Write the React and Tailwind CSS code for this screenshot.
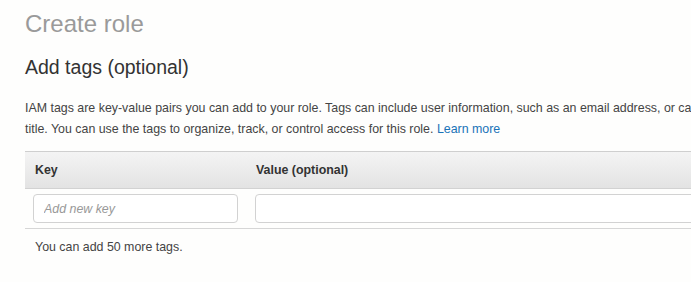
import React from 'react';

export default function App() {
  return (
    <div className="w-[691px] h-[282px] overflow-hidden bg-[#fefefd] font-['Liberation_Sans',Arial,sans-serif]">
      <div className="w-[900px] pl-[25px] pt-[9px]">
        {/* Page title */}
        <h1 className="text-[24px] leading-[30px] text-[#9a9a9a]">Create role</h1>

        {/* Section */}
        <h2 className="mt-[16px] text-[19.5px] leading-[24px] text-[#333]">Add tags (optional)</h2>

        <p className="mt-[19px] text-[12.4px] leading-[21px] text-[#444] whitespace-nowrap">
          IAM tags are key-value pairs you can add to your role. Tags can include user information, such as an email address, or can be descriptive, such as a job
          <br />
          title. You can use the tags to organize, track, or control access for this role.{' '}
          <a href="#" className="text-[#1a73b8]">Learn more</a>
        </p>

        {/* Tags table */}
        <div className="mt-[11px]">
          <div className="flex h-[38px] items-center border-t border-[#cfcfcf] border-b border-b-[#d2d2d2] bg-gradient-to-b from-[#f4f4f4] to-[#e3e3e3] text-[12.4px] font-bold text-[#333]">
            <div className="w-[221px] pl-[10px]">Key</div>
            <div className="pl-[10px]">Value (optional)</div>
          </div>
          <div className="flex items-center h-[40px] border-b border-[#d6d6d6]">
            <div className="w-[221px] pl-[8px]">
              <input
                placeholder="Add new key"
                className="w-[205px] h-[29px] rounded-[4px] border border-[#d2d2d2] bg-white px-[10px] text-[12.4px] italic text-[#333] placeholder:text-[#999] outline-none"
              />
            </div>
            <div className="pl-[9px]">
              <input className="w-[500px] h-[29px] rounded-[4px] border border-[#d2d2d2] bg-white px-[10px] text-[12.4px] outline-none" />
            </div>
          </div>
          <p className="mt-[9px] pl-[10px] text-[12.4px] leading-[18px] text-[#444]">You can add 50 more tags.</p>
        </div>
      </div>
    </div>
  );
}
